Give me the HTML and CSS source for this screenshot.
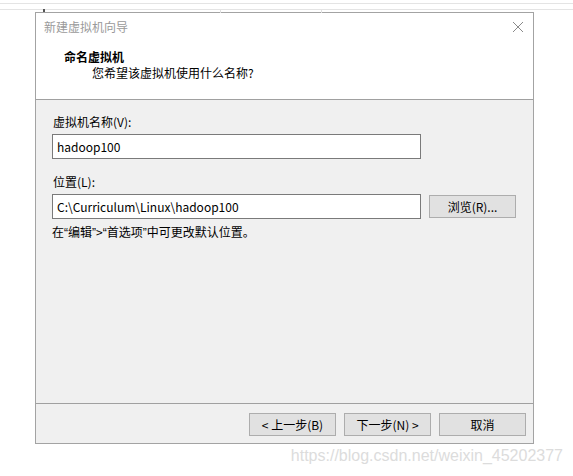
FILE: index.html
```html
<!DOCTYPE html>
<html>
<head>
<meta charset="utf-8">
<link rel="stylesheet" href="styles.css">
</head>
<body>
<div class="topbar">
  <div class="line1"></div>
  <div class="line2">
    <span class="tick t1"></span>
    <span class="tick t2"></span>
  </div>
  <span class="mark"></span>
</div>
<div class="dialog">
  <div class="header">
    <div class="titlebar">
      <span class="wintitle">新建虚拟机向导</span>
      <svg class="close" width="12" height="12" viewBox="0 0 12 12"><path d="M1 1 L11 11 M11 1 L1 11" stroke="#8a8a8a" stroke-width="1" fill="none"/></svg>
    </div>
    <div class="heading">命名虚拟机</div>
    <div class="subheading">您希望该虚拟机使用什么名称?</div>
  </div>
  <div class="content">
    <div class="label">虚拟机名称(V):</div>
    <div class="row">
      <div class="input">hadoop100</div>
    </div>
    <div class="label second">位置(L):</div>
    <div class="row">
      <div class="input">C:\Curriculum\Linux\hadoop100</div>
      <div class="btn browse">浏览(R)...</div>
    </div>
    <div class="note">在<span class="q">“</span>编辑<span class="q">”</span>&gt;<span class="q">“</span>首选项<span class="q">”</span>中可更改默认位置。</div>
  </div>
  <div class="footer">
    <div class="btn">&lt; 上一步(B)</div>
    <div class="btn">下一步(N) &gt;</div>
    <div class="btn">取消</div>
  </div>
</div>
<div class="watermark">https://blog.csdn.net/weixin_45202377</div>
</body>
</html>
```
FILE: styles.css
```css
html, body {
  margin: 0;
  padding: 0;
  background: #ffffff;
  width: 573px;
  height: 476px;
  overflow: hidden;
  font-family: "Microsoft YaHei", "Noto Sans CJK SC", sans-serif;
  font-size: 12px;
  color: #000;
}
.topbar {
  position: relative;
  height: 12px;
}
.line1 {
  height: 3px;
  border-bottom: 1px solid #e4e4e4;
}
.line2 {
  position: relative;
  margin-top: 5px;
  height: 3px;
  border-top: 1px solid #e4e4e4;
}
.tick {
  position: absolute;
  top: 0;
  width: 1px;
  height: 3px;
  background: #e0e0e0;
}
.t1 { left: 220px; }
.t2 { left: 321px; }
.mark {
  position: absolute;
  left: 43px;
  top: 9px;
  width: 2px;
  height: 3px;
  background: #555;
}
.dialog {
  margin-left: 35px;
  width: 497px;
  border: 1px solid #a3a3a3;
  display: flex;
  flex-direction: column;
}
.header {
  background: #ffffff;
  height: 86px;
  border-bottom: 1px solid #a0a0a0;
}
.titlebar {
  display: flex;
  align-items: center;
  justify-content: space-between;
  height: 16px;
  margin-top: 6px;
  padding-left: 8px;
  padding-right: 9px;
}
.wintitle {
  color: #9a9a9a;
  line-height: 16px;
}
.close {
  display: block;
}
.heading {
  font-weight: bold;
  margin-top: 14px;
  padding-left: 28px;
  line-height: 16px;
}
.subheading {
  padding-left: 56px;
  line-height: 16px;
}
.content {
  background: #f0f0f0;
  height: 304px;
  border-bottom: 1px solid #a0a0a0;
  padding: 14px 0 0 16px;
  box-sizing: border-box;
}
.label {
  line-height: 16px;
  padding-left: 1px;
  margin-bottom: 4px;
}
.label.second {
  margin-top: 15px;
}
.row {
  display: flex;
  align-items: flex-start;
  gap: 8px;
}
.input {
  height: 23px;
  line-height: 23px;
  border: 1px solid #7a7a7a;
  background: #fff;
  padding-left: 4px;
  box-sizing: content-box;
  width: 363px;
}
.btn {
  width: 85px;
  height: 21px;
  line-height: 21px;
  border: 1px solid #adadad;
  background: #e1e1e1;
  text-align: center;
}
.browse {
  margin-top: 1px;
}
.note {
  margin-top: 5px;
  line-height: 16px;
}
.q {
  font-family: "Liberation Sans", Arial, sans-serif;
}
.footer {
  background: #f0f0f0;
  height: 39px;
  display: flex;
  justify-content: flex-end;
  align-items: flex-start;
  gap: 8px;
  padding: 9px 7px 0 0;
  box-sizing: border-box;
}
.watermark {
  font-family: "Liberation Sans", Arial, sans-serif;
  font-size: 16px;
  color: #dcdcdc;
  text-align: right;
  padding-right: 10px;
  margin-top: 2px;
  line-height: 20px;
}
```
